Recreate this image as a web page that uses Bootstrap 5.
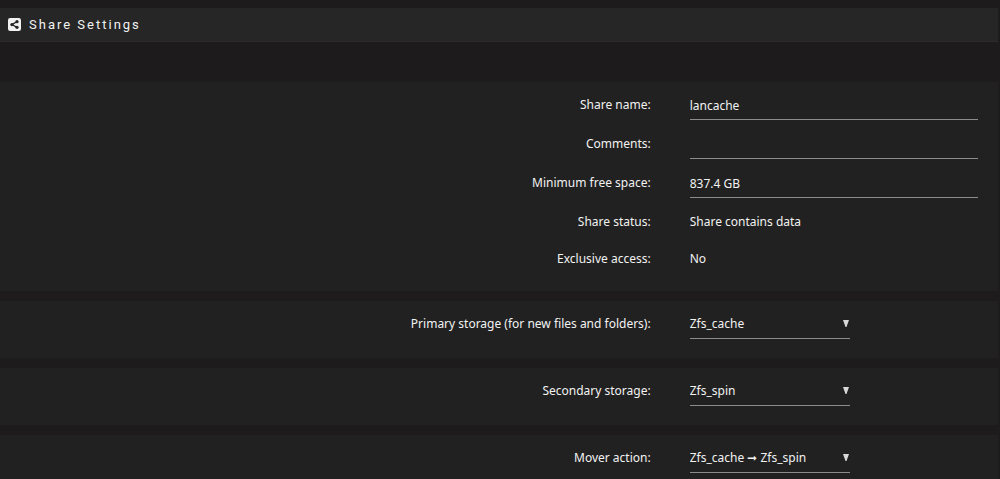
<!DOCTYPE html>
<html lang="en">
<head>
<meta charset="utf-8">
<meta name="viewport" content="width=device-width, initial-scale=1">
<title>Share Settings</title>
<link href="https://cdn.jsdelivr.net/npm/bootstrap@5.3.0/dist/css/bootstrap.min.css" rel="stylesheet">
<style>
  body {
    background: #1d1b1c;
    color: #f2f2f2;
    font: 12px/22px "Noto Sans", "Liberation Sans", sans-serif;
    overflow-x: hidden;
  }
  .title-bar {
    height: 34px;
    margin: 8px 2px 40px 0;
    background: #262626;
    border-bottom: 1px solid #2b2b2b;
  }
  .title-bar h1 { font: 13px/20px Roboto, "Liberation Sans", sans-serif; letter-spacing: 2px; }
  .panel { background: #212121; margin: 0 2px 10px 0; padding: 12px 20px 21px 0; }
  .setting { column-gap: 39px; padding-bottom: 15px; }
  .setting.field { padding-bottom: 13px; }
  .setting-name { width: calc(65% + 15px); text-align: right; flex: none; }
  .panel .form-control, .panel .form-select {
    height: 26px;
    padding: 0 0 3px;
    font: inherit;
    color: #f2f2f2;
    background-color: transparent;
    border: 0;
    border-bottom: 1px solid #8c8c8c;
    border-radius: 0;
    box-shadow: none;
  }
  .panel .form-select {
    width: 160px;
    padding-right: 16px;
    background-image: url("data:image/svg+xml,%3Csvg xmlns='http://www.w3.org/2000/svg' viewBox='0 0 6 7'%3E%3Cpath fill='%23d8d8d8' d='M0 0h6L3.5 7h-1z'/%3E%3C/svg%3E");
    background-size: 6px 7px;
    background-position: right 1px top 7px;
  }
  .panel.single { padding-bottom: 6px; }
</style>
</head>
<body>
<header class="title-bar d-flex align-items-center ps-2">
  <svg class="me-2" width="13" height="13" viewBox="0 0 12 12" aria-hidden="true">
    <rect width="12" height="12" rx="2" fill="#f2f2f2"/>
    <path d="M8.4 3.4 3.6 6l4.8 2.6" fill="none" stroke="#262626" stroke-width="1.2"/>
    <g fill="#262626"><circle cx="8.3" cy="3.4" r="1.5"/><circle cx="3.6" cy="6" r="1.5"/><circle cx="8.3" cy="8.6" r="1.5"/></g>
  </svg>
  <h1 class="m-0">Share Settings</h1>
</header>
<main>
  <form>
    <section class="panel">
      <div class="setting field d-flex">
        <label class="setting-name" for="name">Share name:</label>
        <input class="form-control" id="name" type="text" value="lancache">
      </div>
      <div class="setting field d-flex">
        <label class="setting-name" for="comments">Comments:</label>
        <input class="form-control" id="comments" type="text">
      </div>
      <div class="setting field d-flex">
        <label class="setting-name" for="free">Minimum free space:</label>
        <input class="form-control" id="free" type="text" value="837.4 GB">
      </div>
      <div class="setting d-flex">
        <span class="setting-name">Share status:</span>
        <span>Share contains data</span>
      </div>
      <div class="setting d-flex pb-0">
        <span class="setting-name">Exclusive access:</span>
        <span>No</span>
      </div>
    </section>
    <section class="panel single">
      <div class="setting field d-flex">
        <label class="setting-name" for="primary">Primary storage (for new files and folders):</label>
        <select class="form-select" id="primary"><option>Zfs_cache</option></select>
      </div>
    </section>
    <section class="panel single">
      <div class="setting field d-flex">
        <label class="setting-name" for="secondary">Secondary storage:</label>
        <select class="form-select" id="secondary"><option>Zfs_spin</option></select>
      </div>
    </section>
    <section class="panel single mb-0">
      <div class="setting field d-flex">
        <label class="setting-name" for="mover">Mover action:</label>
        <select class="form-select" id="mover"><option>Zfs_cache ➞ Zfs_spin</option></select>
      </div>
    </section>
  </form>
</main>
<script src="https://cdn.jsdelivr.net/npm/bootstrap@5.3.0/dist/js/bootstrap.bundle.min.js"></script>
</body>
</html>
